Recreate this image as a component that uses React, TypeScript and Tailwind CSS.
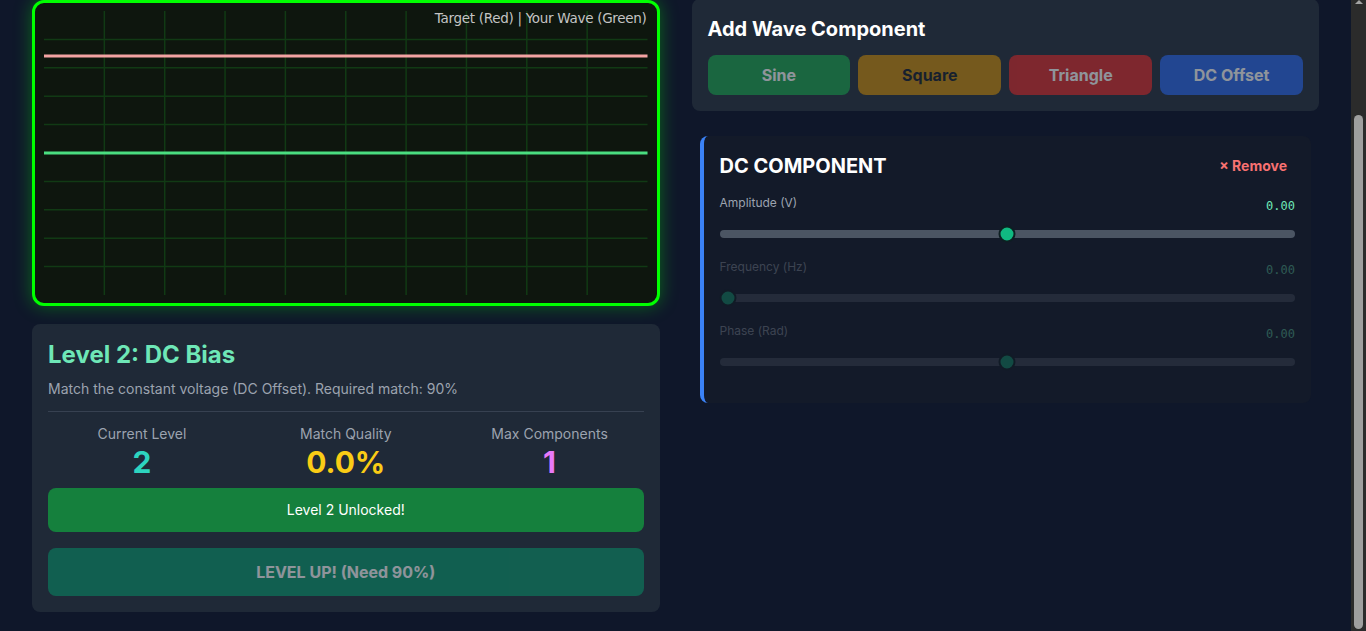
import React, { useLayoutEffect, useRef } from "react";

const W = 604;
const H = 284;

function Scope() {
  const vLines = Array.from({ length: 9 }, (_, i) => ((i + 1) * W) / 10);
  const hLines = Array.from({ length: 9 }, (_, i) => ((i + 1) * H) / 10);
  return (
    <div className="relative rounded-xl border-[3px] border-[#00ff00] bg-[#0e160e] px-[9px] py-2 shadow-[0_0_18px_rgba(0,255,0,0.35)]">
      <svg width="100%" height={H} viewBox={`0 0 ${W} ${H}`} preserveAspectRatio="none" className="block">
        {vLines.map((x) => (
          <line key={"v" + x} x1={x} y1={0} x2={x} y2={H} stroke="#113a14" strokeWidth={1.5} />
        ))}
        {hLines.map((y) => (
          <line key={"h" + y} x1={0} y1={y} x2={W} y2={y} stroke="#113a14" strokeWidth={1.5} />
        ))}
        <line x1={0} y1={45} x2={W} y2={45} stroke="#f4a3a3" strokeWidth={3} />
        <line x1={0} y1={142} x2={W} y2={142} stroke="#4ade80" strokeWidth={3} />
      </svg>
      <div className="absolute right-[10px] top-[5px] text-[13.5px] tracking-[-0.3px] text-[#c4c4c4] [font-family:'DejaVu_Sans',sans-serif]">
        Target (Red) | Your Wave (Green)
      </div>
    </div>
  );
}

function Stat({ label, value, color }: { label: string; value: string; color: string }) {
  return (
    <div className="flex flex-col items-center">
      <div className="text-sm leading-5 text-[#9ca3af]">{label}</div>
      <div className={"text-3xl font-bold leading-9 " + color}>{value}</div>
    </div>
  );
}

function Slider({ label, pos, dim }: { label: string; pos: number; dim?: boolean }) {
  return (
    <div className={"mb-[21px] " + (dim ? "opacity-30" : "")}>
      <div className="flex items-start justify-between">
        <span className="text-xs leading-4 text-[#9ca3af]">{label}</span>
        <span className="pt-[3px] text-xs leading-4 text-[#6ee7b7] [font-family:'DejaVu_Sans_Mono',monospace]">0.00</span>
      </div>
      <div className="relative mt-4 h-2 rounded-full bg-[#4b5563]">
        <div
          className="absolute top-1/2 h-[17px] w-[17px] -translate-x-1/2 -translate-y-1/2 rounded-full border-2 border-[#0d1f22] bg-[#10b981]"
          style={{ left: pos === 0 ? "8px" : `${pos * 100}%` }}
        />
      </div>
    </div>
  );
}

function FakeScrollbar() {
  return (
    <div className="relative h-screen w-[15px] shrink-0 bg-[#2b2b2b]">
      <div className="absolute left-1/2 top-0 h-0 w-0 -translate-x-1/2 border-x-[4px] border-b-[4px] border-x-transparent border-b-[#a3a3a3]" />
      <div className="absolute left-[3px] right-[3px] top-[115px] bottom-[2px] rounded-full bg-[#9f9f9f]" />
    </div>
  );
}

export default function App() {
  const ref = useRef<HTMLDivElement>(null);
  useLayoutEffect(() => {
    if (ref.current) ref.current.scrollTop = ref.current.scrollHeight;
  }, []);
  const waveBtn = "h-10 rounded-lg text-base font-bold opacity-50 flex items-center justify-center";
  return (
    <div className="flex h-screen overflow-hidden bg-[#0f172a] [font-family:Inter,'Noto_Sans',sans-serif]">
      <div ref={ref} className="h-screen min-w-0 flex-1 overflow-hidden">
        <div className="grid grid-cols-2 gap-8 px-8 pt-[97px] pb-[19px]">
          {/* Left column */}
          <div className="flex flex-col">
            <Scope />
            <div className="mt-[18px] rounded-lg bg-[#1f2937] px-4 pt-[15px] pb-4">
              <h2 className="text-2xl font-bold leading-8 text-[#6ee7b7]">Level 2: DC Bias</h2>
              <p className="mt-2 border-b border-[#374151] pb-3 text-sm leading-5 text-[#9ca3af]">
                Match the constant voltage (DC Offset). Required match: 90%
              </p>
              <div className="mt-3 grid grid-cols-3 gap-4">
                <Stat label="Current Level" value="2" color="text-[#2dd4bf]" />
                <Stat label="Match Quality" value="0.0%" color="text-[#facc15]" />
                <Stat label="Max Components" value="1" color="text-[#e879f9]" />
              </div>
              <div className="mt-2 flex h-11 items-center justify-center rounded-lg bg-[#15803d] text-sm font-normal text-white">
                Level 2 Unlocked!
              </div>
              <button className="mt-4 flex h-12 w-full items-center justify-center rounded-lg bg-[#059669] text-base font-bold text-white opacity-50">
                LEVEL UP! (Need 90%)
              </button>
            </div>
          </div>

          {/* Right column */}
          <div className="flex flex-col">
            <div className="-mt-[1px] rounded-lg bg-[#1f2937] px-4 pt-4 pb-4">
              <h3 className="text-xl font-bold leading-7 text-white">Add Wave Component</h3>
              <div className="mt-3 grid grid-cols-4 gap-2">
                <div className={waveBtn + " bg-[#16a34a] text-white"}>Sine</div>
                <div className={waveBtn + " bg-[#ca8a04] text-[#111827]"}>Square</div>
                <div className={waveBtn + " bg-[#dc2626] text-white"}>Triangle</div>
                <div className={waveBtn + " bg-[#2563eb] text-white"}>DC Offset</div>
              </div>
            </div>

            <div className="mx-2 mt-[25px] rounded-lg border-l-4 border-[#3b82f6] bg-[#131a29] pt-4 pr-4 pb-4 pl-4">
              <div className="mb-[15px] flex items-center justify-between">
                <h4 className="text-xl font-bold leading-7 text-white">DC COMPONENT</h4>
                <span className="mr-2 text-sm font-bold text-[#f87171]">× Remove</span>
              </div>
              <Slider label="Amplitude (V)" pos={0.5} />
              <Slider label="Frequency (Hz)" pos={0} dim />
              <Slider label="Phase (Rad)" pos={0.5} dim />
            </div>
          </div>
        </div>
      </div>
      <FakeScrollbar />
    </div>
  );
}
